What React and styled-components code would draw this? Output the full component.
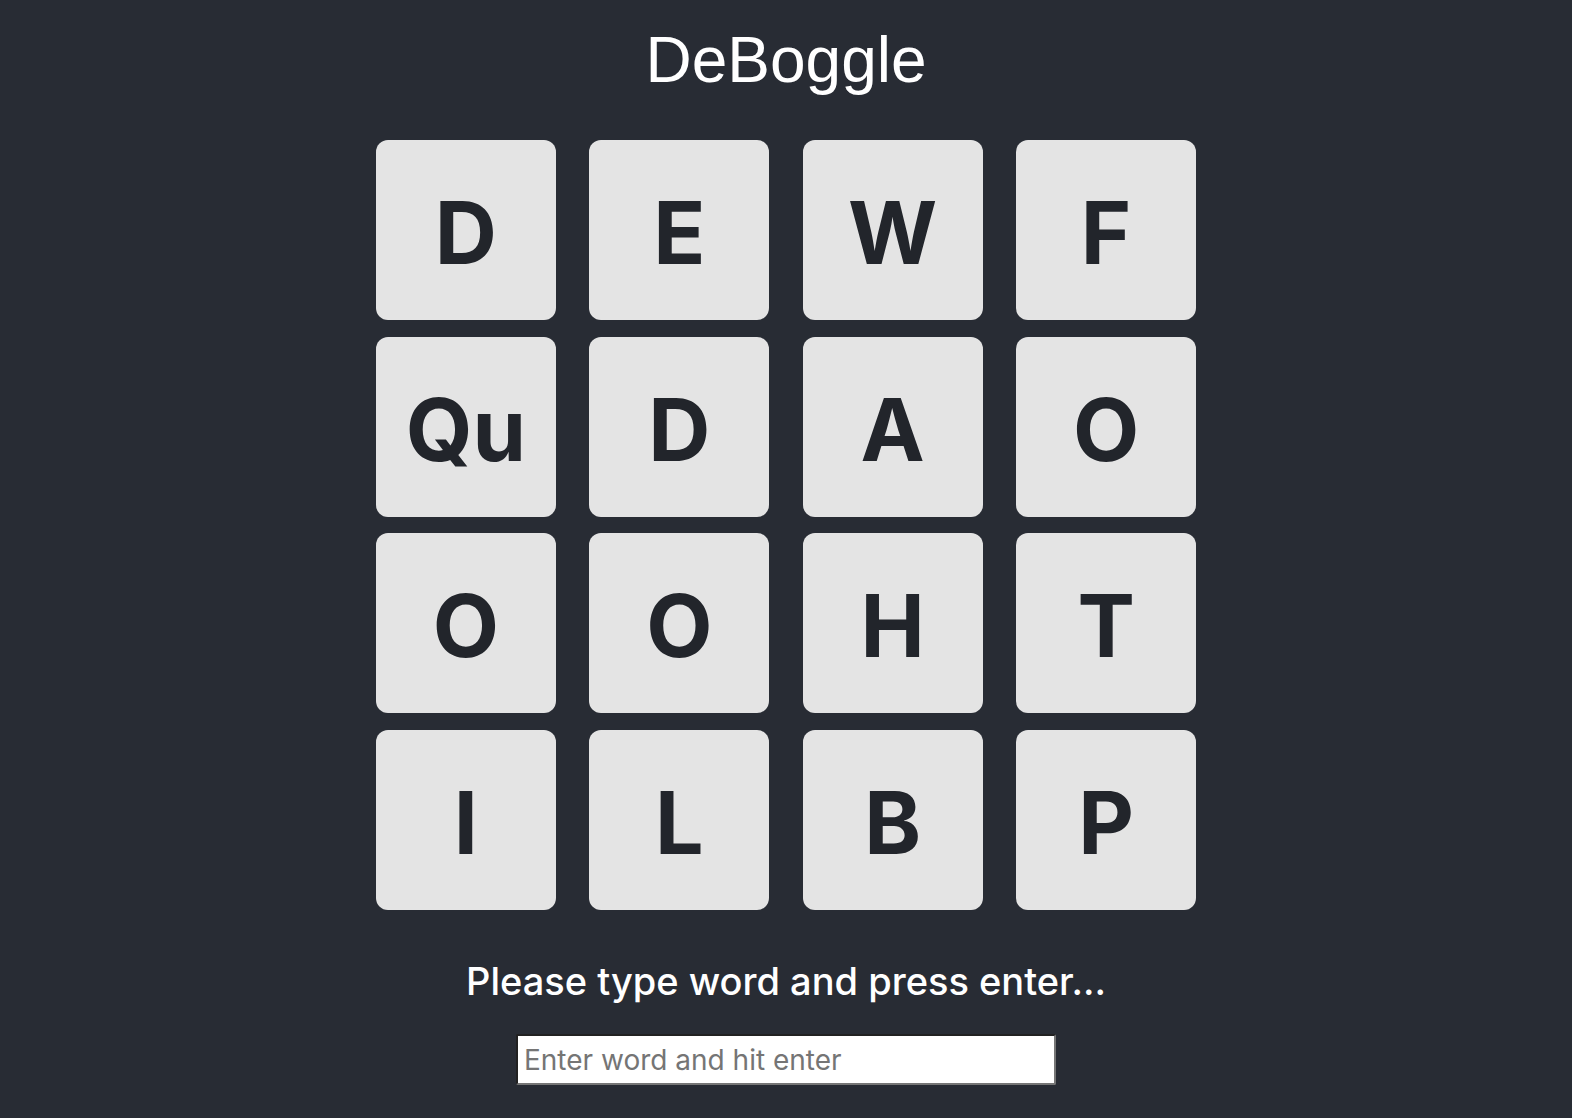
import React from "react";
import styled, { createGlobalStyle } from "styled-components";

const GlobalStyle = createGlobalStyle`
  html, body {
    margin: 0;
    padding: 0;
    background: #282c34;
  }
  * { box-sizing: border-box; }
`;

const Page = styled.div`
  min-height: 100vh;
  display: flex;
  flex-direction: column;
  align-items: center;
  background: #282c34;
  font-family: Inter, "Noto Sans", sans-serif;
  color: #ffffff;
`;

const Title = styled.h1`
  margin: 20px 0 0;
  font-family: "Liberation Sans", Arial, sans-serif;
  font-weight: 400;
  font-size: 64px;
  line-height: 80px;
  color: #ffffff;
`;

const Board = styled.div`
  margin-top: 40px;
  display: grid;
  grid-template-columns: repeat(4, 180px);
  column-gap: 33.4px;
  row-gap: 16.7px;
`;

const Tile = styled.div`
  width: 180px;
  height: 180px;
  border-radius: 12px;
  background: #e4e4e4;
  display: flex;
  align-items: center;
  justify-content: center;
  padding-top: 6px;
  font-family: Inter, "Noto Sans", sans-serif;
  font-weight: 700;
  font-size: 86px;
  color: #22252b;
  line-height: 1;
`;

const Prompt = styled.p`
  margin: 47px 0 0;
  font-size: 38px;
  line-height: 48px;
  font-weight: 500;
  color: #ffffff;
`;

const WordInput = styled.input`
  margin-top: 29px;
  width: 540px;
  height: 51px;
  padding: 0 6px;
  font-family: Inter, "Noto Sans", sans-serif;
  font-size: 28px;
  color: #222;
  background: #ffffff;
  border: 2px inset #767676;
  border-radius: 2px;
  outline: none;
  &::placeholder {
    color: #757575;
  }
`;

const letters = [
  "D", "E", "W", "F",
  "Qu", "D", "A", "O",
  "O", "O", "H", "T",
  "I", "L", "B", "P",
];

export default function App() {
  return (
    <Page>
      <GlobalStyle />
      <Title>DeBoggle</Title>
      <Board>
        {letters.map((l, i) => (
          <Tile key={i}>{l}</Tile>
        ))}
      </Board>
      <Prompt>Please type word and press enter...</Prompt>
      <WordInput placeholder="Enter word and hit enter" />
    </Page>
  );
}
